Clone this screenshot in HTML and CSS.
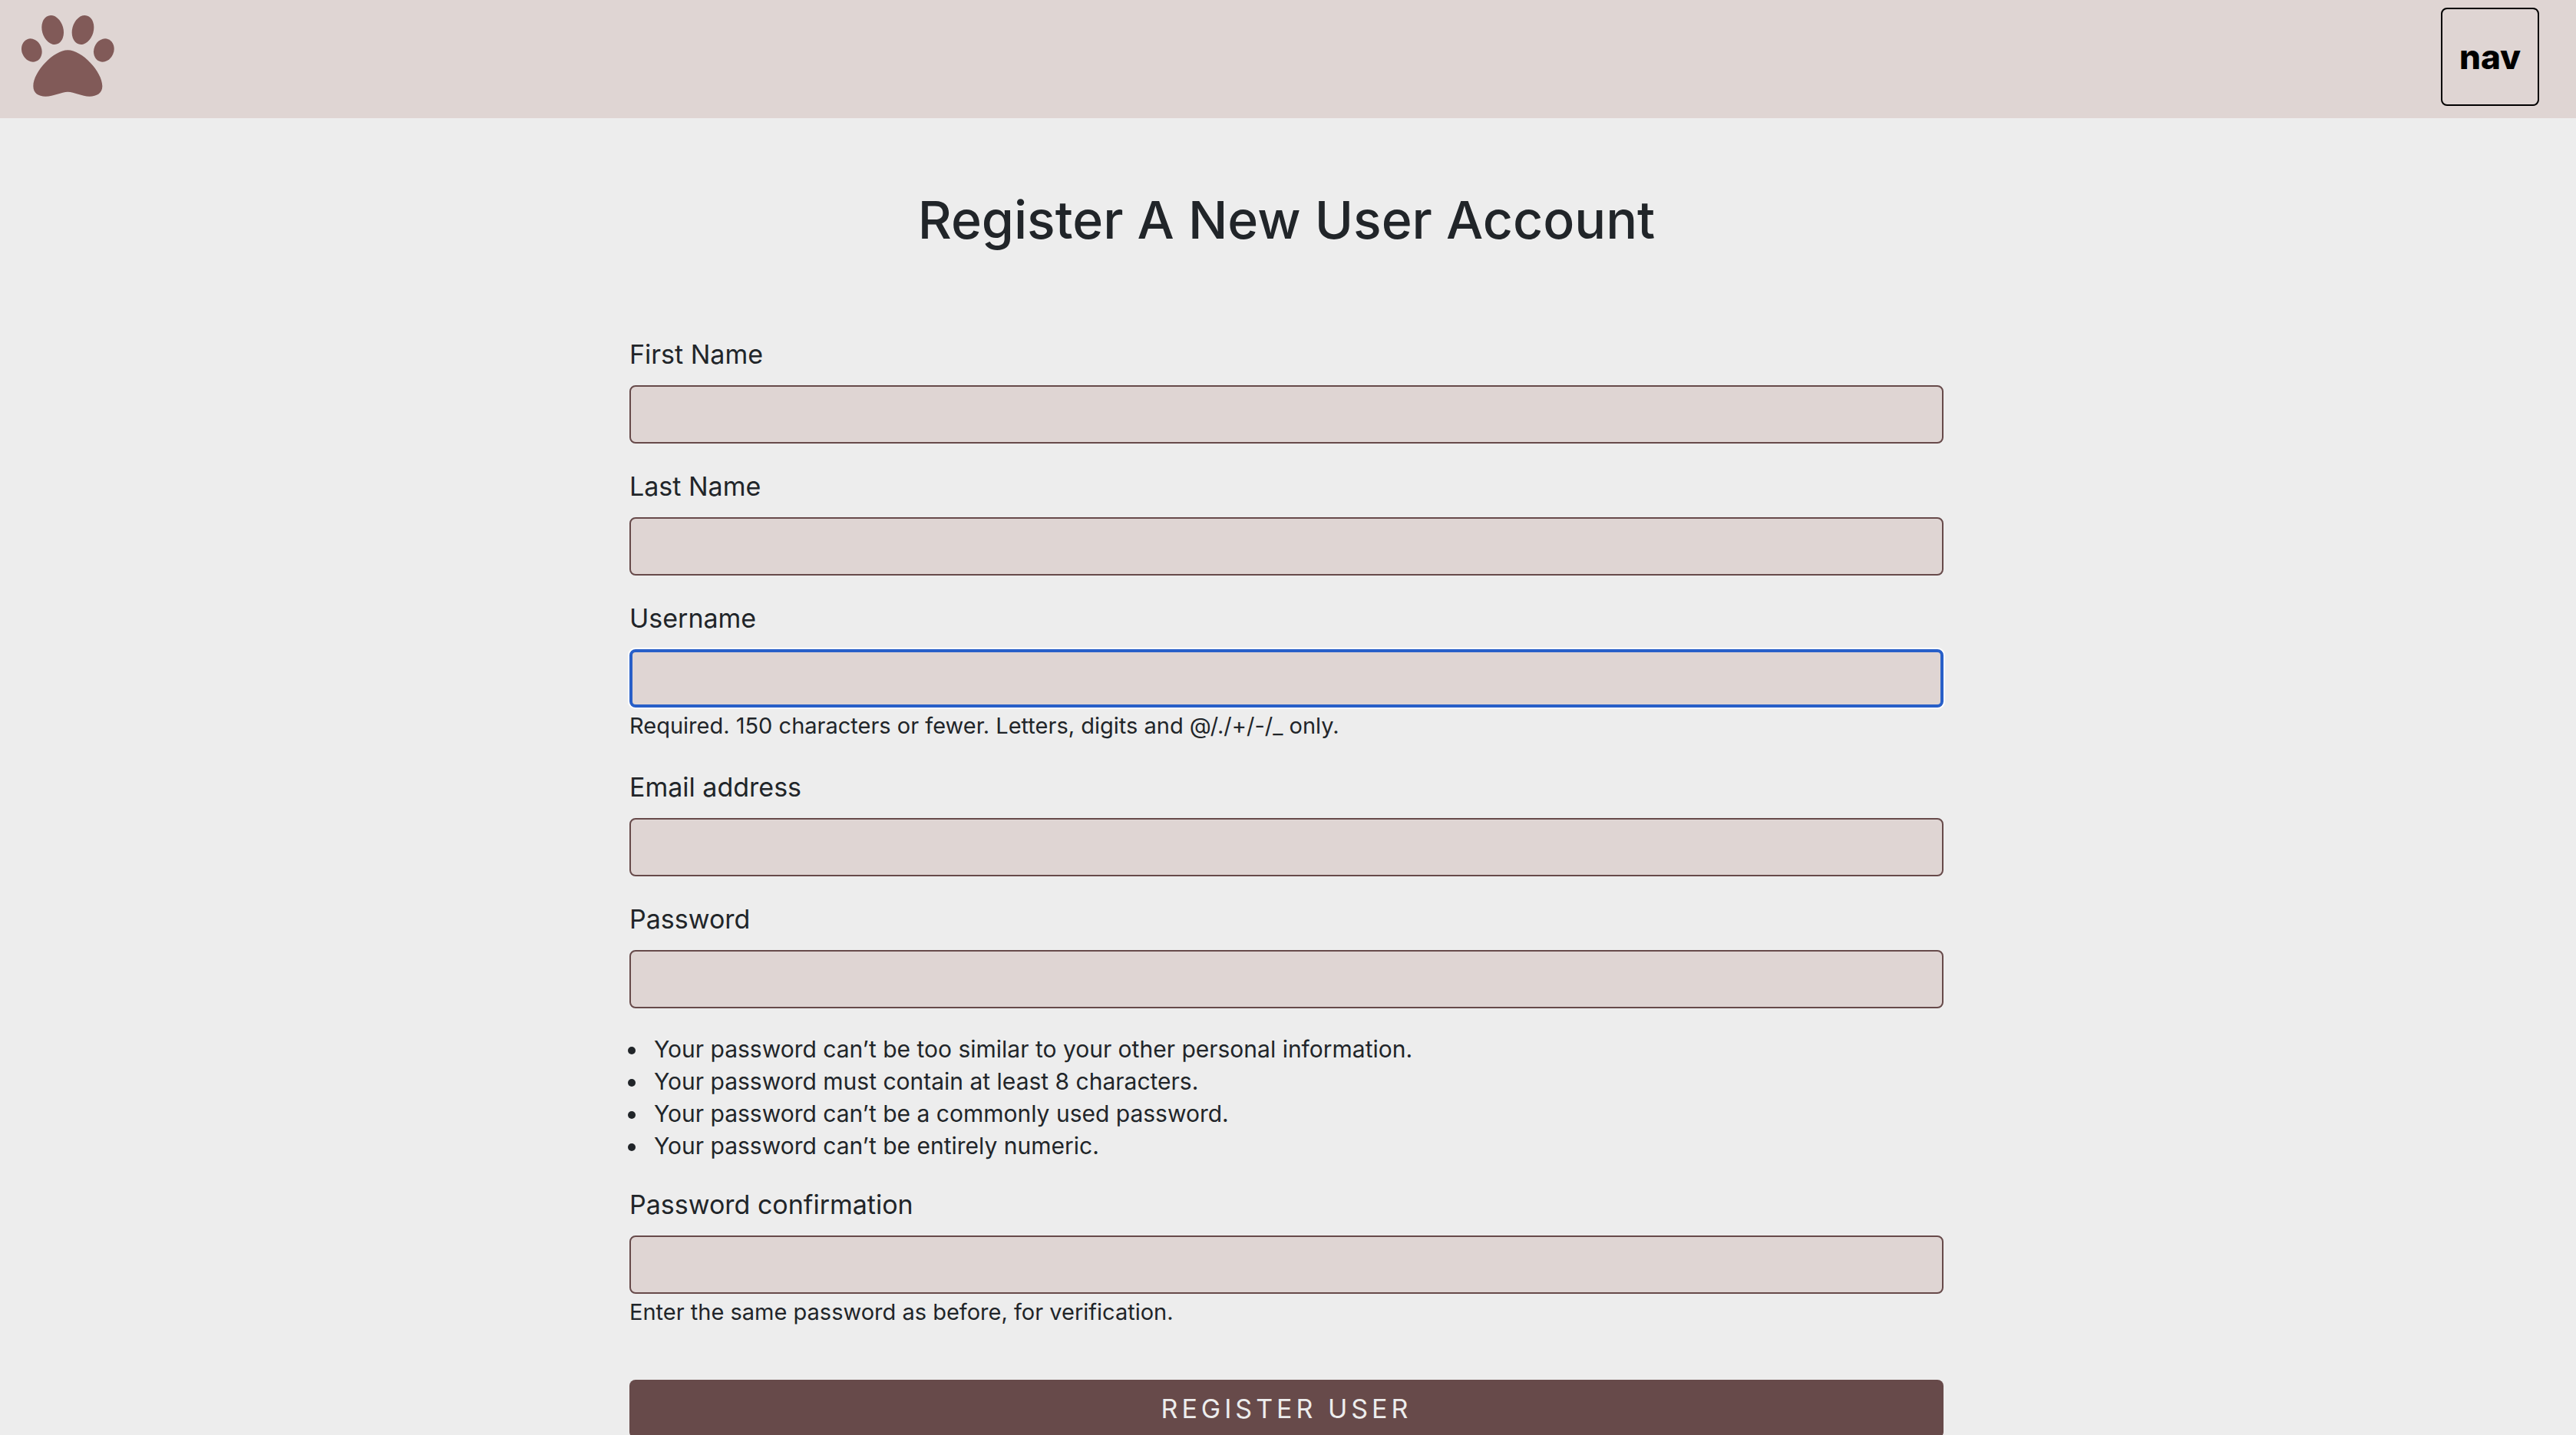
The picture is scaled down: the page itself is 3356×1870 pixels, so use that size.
FILE: index.html
```html
<!DOCTYPE html>
<html lang="en">
<head>
<meta charset="utf-8">
<title>Register</title>
<link rel="stylesheet" href="styles.css">
</head>
<body>
<header class="site-header">
  <a class="logo" href="#" aria-label="Home">
    <svg class="paw" viewBox="84 60 363 318" aria-hidden="true">
      <ellipse cx="124" cy="196.500" rx="38.800" ry="46.500" transform="rotate(-22 124 196.500)"/>
      <ellipse cx="206" cy="117" rx="41.600" ry="58" transform="rotate(-15.700 206 117)"/>
      <ellipse cx="324" cy="117" rx="41.600" ry="58" transform="rotate(15.700 324 117)"/>
      <ellipse cx="406" cy="196.500" rx="38.800" ry="46.500" transform="rotate(22 406 196.500)"/>
      <path d="M265 196C320 196 400 280 400 337C400 365 378 377 350 377C320 377 290 359 265 359C240 359 210 377 178 377C150 377 130 365 130 337C130 280 210 196 265 196Z"/>
    </svg>
  </a>
  <button class="nav-toggle" type="button">nav</button>
</header>
<main class="page">
  <h1 class="title">Register A New User Account</h1>
  <form class="form">
    <div class="field">
      <label class="label" for="first-name">First Name</label>
      <input class="input" id="first-name" type="text">
    </div>
    <div class="field">
      <label class="label" for="last-name">Last Name</label>
      <input class="input" id="last-name" type="text">
    </div>
    <div class="field">
      <label class="label" for="username">Username</label>
      <input class="input input-current" id="username" type="text" aria-describedby="username-help">
      <p class="help" id="username-help">Required. 150 characters or fewer. Letters, digits and @/./+/-/_ only.</p>
    </div>
    <div class="field">
      <label class="label" for="email">Email address</label>
      <input class="input" id="email" type="email">
    </div>
    <div class="field">
      <label class="label" for="password">Password</label>
      <input class="input" id="password" type="password" aria-describedby="password-rules">
      <ul class="rules" id="password-rules">
        <li>Your password can’t be too similar to your other personal information.</li>
        <li>Your password must contain at least 8 characters.</li>
        <li>Your password can’t be a commonly used password.</li>
        <li>Your password can’t be entirely numeric.</li>
      </ul>
    </div>
    <div class="field">
      <label class="label" for="password-confirm">Password confirmation</label>
      <input class="input" id="password-confirm" type="password" aria-describedby="confirm-help">
      <p class="help" id="confirm-help">Enter the same password as before, for verification.</p>
    </div>
    <button class="submit" type="submit">Register User</button>
  </form>
</main>
</body>
</html>
```

FILE: styles.css
```css
* {
  box-sizing: border-box;
}

html {
  scrollbar-width: none;
}

body {
  margin: 0;
  height: 100vh;
  overflow: auto;
  scrollbar-width: none;
  background: #ededed;
  color: #212529;
  font-family: Inter, sans-serif;
  font-size: 34px;
  line-height: 48px;
}

.site-header {
  display: flex;
  justify-content: space-between;
  align-items: flex-start;
  padding: 10px 48px 16px 28px;
  background: #dfd5d3;
}

.logo {
  padding-top: 10px;
}

.paw {
  display: block;
  width: 121px;
  height: 106px;
  fill: #815a58;
}

.nav-toggle {
  width: 128px;
  height: 128px;
  padding: 0;
  border: 2px solid #000;
  border-radius: 8px;
  background: transparent;
  color: #000;
  font-family: inherit;
  font-size: 44px;
  font-weight: 800;
}

.page {
  padding: 92px 4px 64px 0;
}

.title {
  margin: 0 0 112px;
  font-size: 68px;
  font-weight: 500;
  line-height: 80px;
  text-align: center;
}

.form {
  display: flex;
  flex-direction: column;
  gap: 32px;
  width: 100%;
  max-width: 1712px;
  margin: 0 auto;
}

.field {
  display: flex;
  flex-direction: column;
}

.label {
  margin-bottom: 16px;
}

.input {
  width: 100%;
  height: 76px;
  padding: 12px 24px;
  border: 2px solid #674a4a;
  border-radius: 8px;
  outline: none;
  background: #dfd5d3;
  color: inherit;
  font: inherit;
}

.input-current,
.input:focus {
  border: 4px solid #285fc8;
  box-shadow: 0 0 0 2px #fff;
}

.help {
  margin: 0;
  font-size: 29px;
}

.rules {
  margin: 32px 0 0;
  padding-left: 24px;
  font-size: 30px;
  line-height: 42px;
}

.rules li {
  padding-left: 8px;
}

.submit {
  margin-top: 32px;
  padding: 14px 24px;
  border: 0;
  border-radius: 8px;
  background: #674a4a;
  color: #ededed;
  font: inherit;
  letter-spacing: 5px;
  text-transform: uppercase;
}
```
